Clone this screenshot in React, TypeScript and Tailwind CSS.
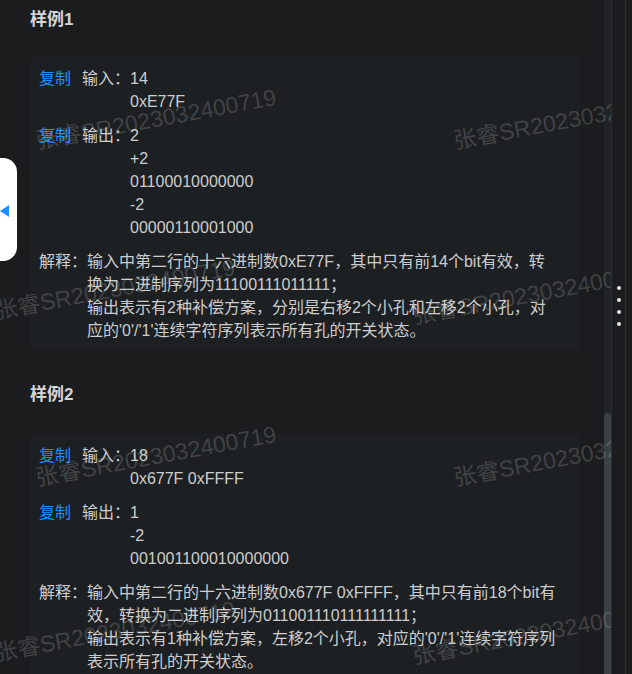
import React from 'react';

const FONT = { fontFamily: '"Liberation Sans", "Noto Sans CJK SC", sans-serif' };

type Sample = {
  title: string;
  input: string[];
  output: string[];
  explain: string[];
};

const samples: Sample[] = [
  {
    title: '样例1',
    input: ['14', '0xE77F'],
    output: ['2', '+2', '01100010000000', '-2', '00000110001000'],
    explain: [
      '输入中第二行的十六进制数0xE77F，其中只有前14个bit有效，转',
      '换为二进制序列为11100111011111；',
      '输出表示有2种补偿方案，分别是右移2个小孔和左移2个小孔，对',
      "应的'0'/'1'连续字符序列表示所有孔的开关状态。",
    ],
  },
  {
    title: '样例2',
    input: ['18', '0x677F 0xFFFF'],
    output: ['1', '-2', '001001100010000000'],
    explain: [
      '输入中第二行的十六进制数0x677F 0xFFFF，其中只有前18个bit有',
      '效，转换为二进制序列为011001110111111111；',
      "输出表示有1种补偿方案，左移2个小孔，对应的'0'/'1'连续字符序列",
      '表示所有孔的开关状态。',
    ],
  },
];

const watermarks = [
  { x: 38, y: 153 },
  { x: 456, y: 153 },
  { x: -3, y: 323 },
  { x: 415, y: 328 },
  { x: 38, y: 490 },
  { x: 456, y: 490 },
  { x: -3, y: 665 },
  { x: 415, y: 668 },
];

const Lines: React.FC<{ lines: string[] }> = ({ lines }) => (
  <div className="flex flex-col">
    {lines.map((l, i) => (
      <div key={i} className="whitespace-nowrap">
        {l}
      </div>
    ))}
  </div>
);

const IoRow: React.FC<{ label: string; lines: string[]; className?: string }> = ({
  label,
  lines,
  className = '',
}) => (
  <div className={`flex ${className}`}>
    <span className="w-[32px] text-[#1f8fff] cursor-pointer">复制</span>
    <span className="ml-[11px] w-[48px]">{label}</span>
    <Lines lines={lines} />
  </div>
);

const SampleBlock: React.FC<{ s: Sample; first: boolean }> = ({ s, first }) => (
  <div className={first ? 'pt-[8px]' : 'mt-[33px]'}>
    <h3
      className={`text-[17px] leading-[24px] font-bold text-[#d6d6d6] ${
        first ? 'mb-[25px]' : 'mb-[27px]'
      }`}
    >
      {s.title}
    </h3>
    <div className="rounded-[4px] bg-[#1d2022] pl-[9px] pr-[10px] pt-[10px] pb-[8px] text-[16px] leading-[23px] text-[#cdcdcd]">
      <IoRow label="输入：" lines={s.input} />
      <IoRow label="输出：" lines={s.output} className="mt-[11px]" />
      <div className="flex mt-[11px]">
        <span className="w-[48px] shrink-0">解释：</span>
        <Lines lines={s.explain} />
      </div>
    </div>
  </div>
);

export default function App() {
  return (
    <div className="relative flex w-[632px] h-[674px] overflow-hidden bg-[#1b1c1e]" style={FONT}>
      <div className="relative flex w-[611px] h-full overflow-hidden">
        <div className="flex-1 pl-[30px] pr-[25px]">
          {samples.map((s, i) => (
            <SampleBlock key={i} s={s} first={i === 0} />
          ))}
        </div>
        <div className="flex flex-col w-[7px] h-full bg-[#212426]">
          <div className="h-[413px]" />
          <div className="flex-1 rounded-t-full bg-[#3b4043]" />
        </div>
        {/* watermark */}
        <div className="pointer-events-none absolute inset-0">
          {watermarks.map((w, i) => (
            <span
              key={i}
              className="absolute origin-bottom-left whitespace-nowrap text-[23px] leading-[23px] text-[rgba(255,255,255,0.17)] -rotate-[10.5deg]"
              style={{ left: w.x, top: w.y - 23 }}
            >
              张睿SR2023032400719
            </span>
          ))}
        </div>
      </div>
      <div className="w-px h-full bg-[#2d3033]" />
      <div className="flex flex-col items-center w-[13px] h-full">
        <div className="mt-[286px] flex flex-col gap-[8px]">
          <span className="block w-[4px] h-[4px] rounded-full bg-[#e8e8e8]" />
          <span className="block w-[4px] h-[4px] rounded-full bg-[#e8e8e8]" />
          <span className="block w-[4px] h-[4px] rounded-full bg-[#e8e8e8]" />
          <span className="block w-[4px] h-[4px] rounded-full bg-[#e8e8e8]" />
        </div>
      </div>
      <div className="w-px h-full bg-[#2d3033]" />
      <div className="flex-1 h-full" />

      {/* collapsed side panel tab */}
      <div className="absolute left-0 top-[158px] w-[17px] h-[103px] rounded-r-[14px] bg-white">
        <svg className="absolute left-0 top-[47px]" width="9" height="12" viewBox="0 0 9 12">
          <polygon points="0,6 9,0 9,12" fill="#1f8fff" />
        </svg>
      </div>
    </div>
  );
}
